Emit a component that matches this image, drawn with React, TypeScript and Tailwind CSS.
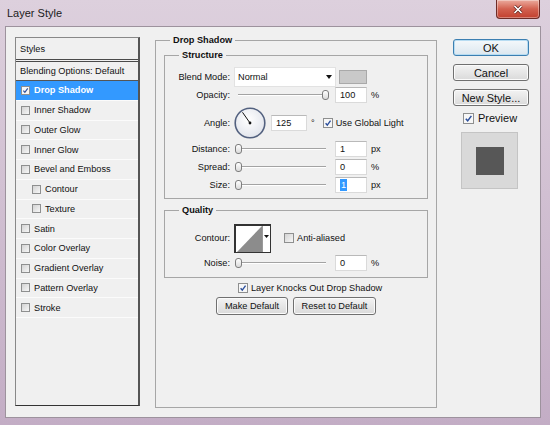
import React from "react";

type BoxProps = { checked?: boolean; className?: string };

const Box = ({ checked = false, className = "h-[9px] w-[9px]" }: BoxProps) => (
  <span
    className={`inline-flex shrink-0 items-center justify-center border border-[#8e8f8f] ${
      checked ? "bg-[#f7f7f7]" : "bg-linear-to-br from-[#d3d3d3] to-[#f7f7f7]"
    } ${className}`}
  >
    {checked && (
      <svg viewBox="0 0 10 10" className="h-full w-full">
        <path d="M2 5.3 L4.1 7.6 L8.2 2.1" stroke="#2c4f9c" strokeWidth="1.7" fill="none" />
      </svg>
    )}
  </span>
);

const Btn = ({
  children,
  primary,
  className = "",
}: {
  children: React.ReactNode;
  primary?: boolean;
  className?: string;
}) => (
  <div
    className={`flex items-center justify-center rounded-[3px] border ${
      primary
        ? "border-[#3c7fb1] bg-linear-to-b from-[#f4f8fb] to-[#dce7ef] shadow-[inset_0_0_0_1px_#b7dcf2]"
        : "border-[#707070] bg-linear-to-b from-[#f3f3f3] to-[#dadada] shadow-[inset_0_0_0_1px_#fbfbfb]"
    } ${className}`}
  >
    {children}
  </div>
);

const Arrow = () => (
  <svg width="6" height="4" viewBox="0 0 6 4">
    <polygon points="0,0 6,0 3,4" fill="#111" />
  </svg>
);

const Field = ({
  value,
  className = "w-[32px]",
  selected,
}: {
  value: string;
  className?: string;
  selected?: boolean;
}) => (
  <div
    className={`flex h-[16px] items-center border border-[#dadada] border-t-[#b9b9b9] bg-white pl-[4px] ${className}`}
  >
    {selected ? <span className="bg-[#3399ff] px-[1px] leading-[12px] text-white">{value}</span> : value}
  </div>
);

const Slider = ({ atEnd }: { atEnd?: boolean }) => (
  <div className="relative ml-[1px] h-[16px] w-[94px]">
    <div className="absolute left-[3px] right-[3px] top-[7px] h-[2px] border-b border-t border-b-white border-t-[#a3a3a3]" />
    <div
      className={`absolute top-[3px] h-[10px] w-[7px] rounded-[3px] border border-[#7d7d7d] bg-linear-to-b from-white to-[#dadada] ${
        atEnd ? "right-0" : "left-0"
      }`}
    />
  </div>
);

const Row = ({
  label,
  className = "",
  children,
}: {
  label: string;
  className?: string;
  children: React.ReactNode;
}) => (
  <div className={`flex items-center ${className}`}>
    <span className="w-[65px] text-right">{label}</span>
    <div className="ml-[4px] flex items-center">{children}</div>
  </div>
);

const styles = [
  { label: "Drop Shadow", checked: true, active: true },
  { label: "Inner Shadow" },
  { label: "Outer Glow" },
  { label: "Inner Glow" },
  { label: "Bevel and Emboss" },
  { label: "Contour", sub: true },
  { label: "Texture", sub: true },
  { label: "Satin" },
  { label: "Color Overlay" },
  { label: "Gradient Overlay" },
  { label: "Pattern Overlay" },
  { label: "Stroke" },
];

const App = () => {
  return (
    <div className="flex h-[425px] w-[550px] flex-col bg-linear-to-b from-[#ddd0dd] to-[#c3adc5] font-['Liberation_Sans',Arial,sans-serif] text-[#111]">
      {/* title bar */}
      <div className="flex h-[26px] shrink-0 items-start justify-between">
        <span className="ml-[7px] mt-[6px] text-[11px] leading-[14px] text-[#1b1b1b]">Layer Style</span>
        <div className="mr-[10px] flex h-[19px] w-[44px] items-center justify-center rounded-b-[4px] border border-t-0 border-[#6e2c27] bg-linear-to-b from-[#eaaa9d] via-[#d2604f] to-[#c2402f] shadow-[inset_0_0_0_1px_rgba(255,255,255,0.35)]">
          <svg width="10" height="9" viewBox="0 0 10 9">
            <path d="M1.5 1 L8.5 8 M8.5 1 L1.5 8" stroke="#5a1f1a" strokeWidth="3" />
            <path d="M1.5 1 L8.5 8 M8.5 1 L1.5 8" stroke="#fff" strokeWidth="1.7" />
          </svg>
        </div>
      </div>

      {/* dialog body */}
      <div className="mb-[7px] ml-[5px] flex w-[536px] flex-1 items-start border border-[#9d929d] bg-[#f0f0f0] pl-[9px] pt-[7px] text-[9.2px] leading-[12px]">
        {/* styles list */}
        <div className="mt-[3px] flex h-[369px] w-[125px] flex-col border border-[#888] border-b-[#333] border-r-2 border-r-[#555]">
          <div className="flex h-[24px] items-center border-b-[3px] border-double border-[#4a4a4a] pl-[4px]">Styles</div>
          <div className="flex h-[19px] items-center border-b border-[#555] pl-[4px]">Blending Options: Default</div>
          {styles.map((s) => (
            <div
              key={s.label}
              className={`flex h-[19.75px] items-center gap-[4px] border-b ${
                s.active ? "border-[#fbfbfb] bg-[#3399ff] font-bold text-white" : "border-[#fbfbfb]"
              } ${s.sub ? "pl-[16px]" : "pl-[5px]"}`}
            >
              <Box checked={s.checked} />
              {s.label}
            </div>
          ))}
        </div>

        {/* drop shadow group */}
        <fieldset className="ml-[15px] h-[374px] w-[282px] border border-[#a6a6a6] px-[8px]">
          <legend className="ml-[6px] px-[3px] font-bold leading-[12px]">Drop Shadow</legend>

          <fieldset className="mt-[3px] w-[264px] border border-[#a6a6a6] pb-[5px]">
            <legend className="ml-[14px] px-[3px] font-bold leading-[12px]">Structure</legend>
            <Row label="Blend Mode:" className="mt-[6px] h-[20px]">
              <div className="flex h-[20px] w-[102px] items-center justify-between border border-[#e2e2e2] bg-white pl-[3px] pr-[3px]">
                Normal
                <Arrow />
              </div>
              <div className="ml-[3px] h-[14px] w-[28px] border border-[#a9a9a9] bg-[#c9c9c9]" />
            </Row>
            <Row label="Opacity:" className="h-[16px]">
              <Slider atEnd />
              <Field value="100" className="ml-[6px] w-[32px]" />
              <span className="ml-[4px]">%</span>
            </Row>
            <Row label="Angle:" className="mt-[4px] h-[32px]">
              <svg width="32" height="32" viewBox="0 0 32 32">
                <defs>
                  <radialGradient id="dial" cx="45%" cy="40%" r="60%">
                    <stop offset="0" stopColor="#ffffff" />
                    <stop offset="1" stopColor="#e2e5ec" />
                  </radialGradient>
                </defs>
                <circle cx="16" cy="16" r="14.8" fill="url(#dial)" stroke="#53617f" strokeWidth="1.6" />
                <line x1="16" y1="16" x2="8.5" y2="5.3" stroke="#111" strokeWidth="1" />
                <circle cx="16" cy="16" r="1.4" fill="#111" />
              </svg>
              <Field value="125" className="ml-[5px] w-[36px]" />
              <span className="ml-[4px]">°</span>
              <Box checked className="ml-[8px] h-[10px] w-[10px]" />
              <span className="ml-[3px]">Use Global Light</span>
            </Row>
            <Row label="Distance:" className="mt-[2px] h-[16px]">
              <Slider />
              <Field value="1" className="ml-[6px] w-[32px]" />
              <span className="ml-[4px]">px</span>
            </Row>
            <Row label="Spread:" className="mt-[2px] h-[16px]">
              <Slider />
              <Field value="0" className="ml-[6px] w-[32px]" />
              <span className="ml-[4px]">%</span>
            </Row>
            <Row label="Size:" className="mt-[2px] h-[16px]">
              <Slider />
              <Field value="1" selected className="ml-[6px] w-[32px]" />
              <span className="ml-[4px]">px</span>
            </Row>
          </fieldset>

          <fieldset className="mt-[5px] w-[264px] border border-[#a6a6a6] pb-[6px]">
            <legend className="ml-[14px] px-[3px] font-bold leading-[12px]">Quality</legend>
            <Row label="Contour:" className="mt-[8px] h-[28px]">
              <div className="flex h-[29px] w-[37px] border border-[#333] border-l-2 border-t-2 bg-white">
                <svg className="h-full w-[26px]" viewBox="0 0 26 26" preserveAspectRatio="none">
                  <polygon points="1,26 26,0 26,26" fill="#8c8c8c" />
                </svg>
                <div className="flex flex-1 justify-center border-l border-[#9a9a9a] pt-[9px]">
                  <svg width="5" height="3" viewBox="0 0 5 3">
                    <polygon points="0,0 5,0 2.5,3" fill="#111" />
                  </svg>
                </div>
              </div>
              <Box className="ml-[13px] h-[10px] w-[10px]" />
              <span className="ml-[3px]">Anti-aliased</span>
            </Row>
            <Row label="Noise:" className="mt-[3px] h-[16px]">
              <Slider />
              <Field value="0" className="ml-[6px] w-[32px]" />
              <span className="ml-[4px]">%</span>
            </Row>
          </fieldset>

          <div className="ml-[74px] mt-[4px] flex h-[12px] items-center gap-[3px]">
            <Box checked className="h-[10px] w-[10px]" />
            Layer Knocks Out Drop Shadow
          </div>
          <div className="ml-[52px] mt-[3px] flex gap-[5px]">
            <Btn className="h-[18px] w-[72px]">Make Default</Btn>
            <Btn className="h-[18px] w-[83px]">Reset to Default</Btn>
          </div>
        </fieldset>

        {/* right column */}
        <div className="ml-[16px] mt-[5px] flex w-[76px] flex-col text-[11px] leading-[14px]">
          <Btn primary className="h-[17px]">OK</Btn>
          <Btn className="mt-[8px] h-[17px]">Cancel</Btn>
          <Btn className="mt-[8px] h-[17px]">New Style...</Btn>
          <div className="mt-[6px] flex h-[12px] items-center gap-[4px] pl-[10px]">
            <Box checked className="h-[11px] w-[11px]" />
            Preview
          </div>
          <div className="ml-[8px] mt-[8px] flex h-[57px] w-[57px] items-center justify-center border border-[#c4c4c4] bg-[#d9d9d9]">
            <div className="h-[28px] w-[28px] bg-[#575757]" />
          </div>
        </div>
      </div>
    </div>
  );
};

export default App;
